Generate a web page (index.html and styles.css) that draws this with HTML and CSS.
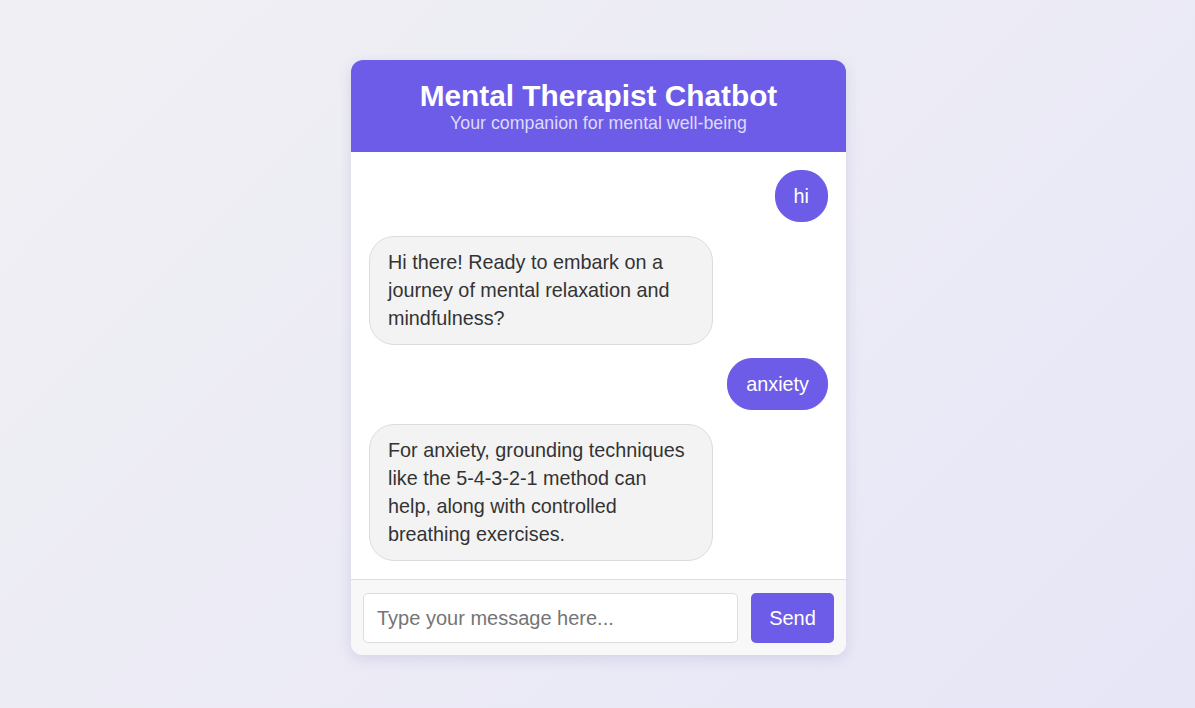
FILE: index.html
```html
<!DOCTYPE html>
<html lang="en">
<head>
<meta charset="utf-8">
<title>Mental Therapist Chatbot</title>
<link rel="stylesheet" href="styles.css">
</head>
<body>
<div class="chat-container">
  <header class="chat-header">
    <h1 class="title">Mental Therapist Chatbot</h1>
    <p class="subtitle">Your companion for mental well-being</p>
  </header>
  <div class="chat-box">
    <div class="message user">hi</div>
    <div class="message bot">Hi there! Ready to embark on a journey of mental relaxation and mindfulness?</div>
    <div class="message user">anxiety</div>
    <div class="message bot">For anxiety, grounding techniques like the 5-4-3-2-1 method can help, along with controlled breathing exercises.</div>
  </div>
  <div class="input-area">
    <input class="msg-input" type="text" placeholder="Type your message here...">
    <button class="send-btn">Send</button>
  </div>
</div>
</body>
</html>
```
FILE: styles.css
```css
html, body {
  margin: 0;
  height: 100%;
}
body {
  font-family: "Liberation Sans", Arial, sans-serif;
  background: linear-gradient(135deg, #f0f0f4 0%, #e7e6f7 100%);
  display: flex;
  justify-content: center;
  align-items: flex-start;
  padding: 60px 0 0 2px;
  box-sizing: border-box;
}
.chat-container {
  width: 495px;
  height: 595px;
  background: #fff;
  border-radius: 12px;
  box-shadow: 0 4px 14px rgba(60, 50, 120, 0.12);
  display: flex;
  flex-direction: column;
  overflow: hidden;
}
.chat-header {
  background: #6c5ce7;
  color: #fff;
  text-align: center;
  padding: 19px 20px;
}
.title {
  margin: 0;
  font-size: 29.8px;
  line-height: 34px;
  font-weight: bold;
}
.subtitle {
  margin: 0;
  font-size: 17.8px;
  line-height: 20px;
  color: rgba(255, 255, 255, 0.78);
}
.chat-box {
  flex: 1;
  overflow: hidden;
  padding: 18px;
  display: flex;
  flex-direction: column;
}
.message {
  font-size: 19.8px;
  line-height: 28px;
  padding: 11px 18px;
  border-radius: 25px;
  max-width: 75%;
  box-sizing: border-box;
  border: 1px solid transparent;
}
.message.user {
  align-self: flex-end;
  background: #6c5ce7;
  border-color: #6c5ce7;
  color: #fff;
  margin-bottom: 14px;
}
.message.bot {
  align-self: flex-start;
  background: #f3f3f3;
  border-color: #dcdcdc;
  color: #333;
  padding-bottom: 12px;
  margin-bottom: 13px;
}
.input-area {
  border-top: 1px solid #dddddd;
  background: #f8f8f8;
  padding: 13px 12px 12px;
  display: flex;
  gap: 13px;
}
.msg-input {
  flex: 1;
  height: 50px;
  box-sizing: border-box;
  border: 1px solid #dddddd;
  border-radius: 5px;
  padding: 0 13px;
  font-family: "Liberation Sans", Arial, sans-serif;
  font-size: 20px;
  color: #333;
  background: #fff;
  outline: none;
}
.msg-input::placeholder {
  color: #757575;
}
.send-btn {
  width: 83px;
  height: 50px;
  border: none;
  border-radius: 5px;
  background: #6c5ce7;
  color: #fff;
  font-family: "Liberation Sans", Arial, sans-serif;
  font-size: 20px;
  cursor: pointer;
}
```
